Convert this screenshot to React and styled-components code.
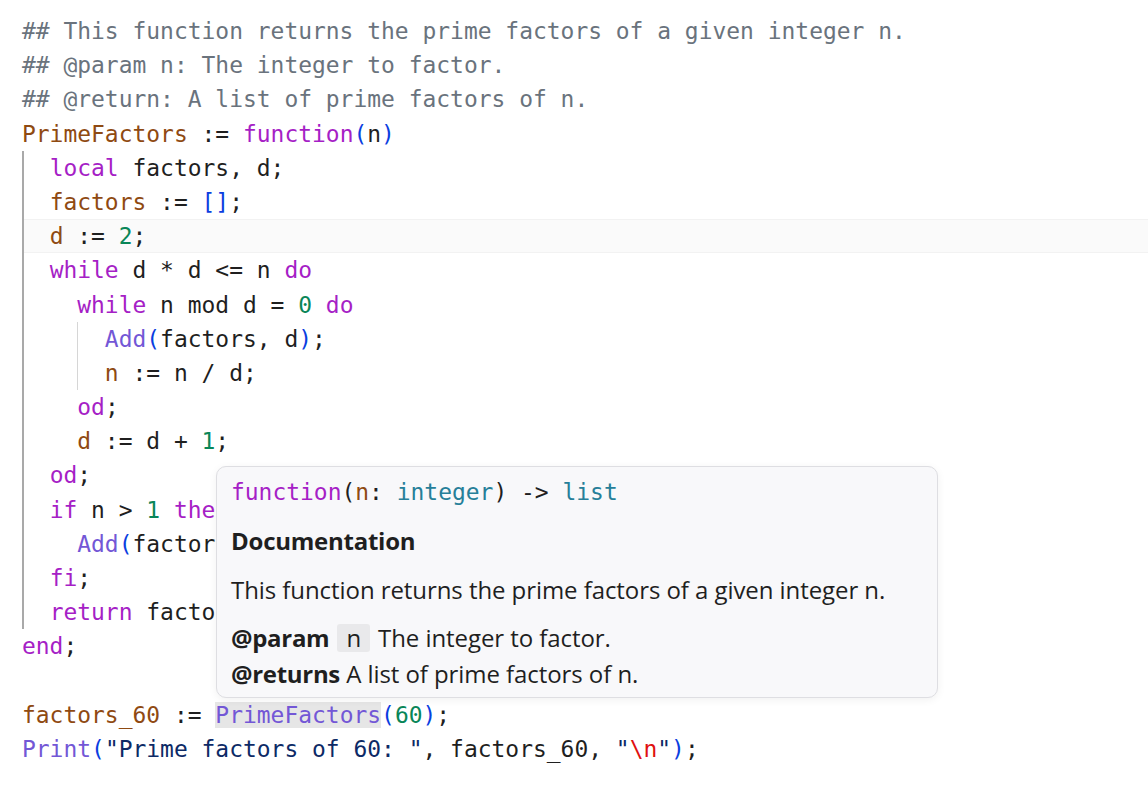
import React from "react";
import styled, { createGlobalStyle } from "styled-components";

const Global = createGlobalStyle`
  html, body { margin: 0; padding: 0; background: #ffffff; }
  body { width: 1148px; height: 799px; overflow: hidden; }
`;

const COLORS = {
  cm: "#6a737d",
  vr: "#8f4a12",
  kw: "#a61fc6",
  br: "#0a3ee0",
  nm: "#098658",
  fn: "#7357d6",
  tx: "#1f1f1f",
  st: "#0d2a66",
  es: "#e01010",
  ty: "#267f99",
};

const Page = styled.div`
  position: relative;
  width: 1148px;
  height: 799px;
  background: #ffffff;
`;

const Code = styled.div`
  padding: 14px 0 0 22px;
  font-family: "DejaVu Sans Mono", "Liberation Mono", monospace;
  font-size: 22.95px;
  color: ${COLORS.tx};
`;

const Line = styled.div`
  height: 34.2px;
  white-space: pre;
  box-sizing: border-box;
  background: ${(p) => (p.$active ? "#fafafa" : "transparent")};
  border-top: 1px solid ${(p) => (p.$active ? "#f2f2f2" : "transparent")};
  border-bottom: 1px solid ${(p) => (p.$active ? "#f2f2f2" : "transparent")};
  line-height: 32.2px;
`;

const Block = styled.div`
  position: relative;
  &::before {
    content: "";
    position: absolute;
    top: 0;
    bottom: 0;
    left: ${(p) => p.$guide}px;
    width: ${(p) => (p.$strong ? 2 : 1)}px;
    background: ${(p) => (p.$strong ? "#a9a9a9" : "#d6d6d6")};
    z-index: 1;
  }
`;

const T = styled.span`
  color: ${(p) => COLORS[p.$c] || COLORS.tx};
  background: ${(p) => (p.$hl ? "#e6e6e6" : "transparent")};
`;

const Hover = styled.div`
  position: absolute;
  left: 216px;
  top: 466px;
  width: 722px;
  height: 232px;
  box-sizing: border-box;
  background: #f8f8fa;
  border: 1px solid #dedee2;
  border-radius: 10px;
  box-shadow: 0 2px 8px rgba(0, 0, 0, 0.06);
  padding: 8px 14px 0 14px;
  z-index: 5;
  color: #1f1f1f;
`;

const Signature = styled.div`
  font-family: "DejaVu Sans Mono", "Liberation Mono", monospace;
  font-size: 22.95px;
  line-height: 34px;
  white-space: pre;
`;

const Heading = styled.div`
  margin-top: 16px;
  font-family: "Open Sans", "Noto Sans", sans-serif;
  font-weight: 700;
  font-size: 24px;
  line-height: 32px;
  letter-spacing: -0.25px;
`;

const Para = styled.div`
  margin-top: ${(p) => p.$gap}px;
  font-family: "Open Sans", "Noto Sans", sans-serif;
  font-size: 24px;
  line-height: 32px;
  letter-spacing: -0.07px;
  display: flex;
  align-items: center;
  white-space: pre;
`;

const Tag = styled.b`
  font-weight: 700;
  letter-spacing: -0.3px;
`;

const Chip = styled.span`
  display: inline-flex;
  align-items: center;
  height: 28px;
  padding: 0 9px;
  margin: 0 8px 0 8px;
  background: #e9e9eb;
  border-radius: 3px;
`;

export default function App() {
  return (
    <Page>
      <Global />
      <Code>
        <Line><T $c="cm">## This function returns the prime factors of a given integer n.</T></Line>
        <Line><T $c="cm">## @param n: The integer to factor.</T></Line>
        <Line><T $c="cm">## @return: A list of prime factors of n.</T></Line>
        <Line>
          <T $c="vr">PrimeFactors</T> := <T $c="kw">function</T><T $c="br">(</T>n<T $c="br">)</T>
        </Line>
        <Block $guide={0} $strong>
          <Line>  <T $c="kw">local</T> factors, d;</Line>
          <Line>  <T $c="vr">factors</T> := <T $c="br">[]</T>;</Line>
          <Line $active>  <T $c="vr">d</T> := <T $c="nm">2</T>;</Line>
          <Line>  <T $c="kw">while</T> d * d {"<="} n <T $c="kw">do</T></Line>
          <Line>    <T $c="kw">while</T> n mod d = <T $c="nm">0</T> <T $c="kw">do</T></Line>
          <Block $guide={55}>
            <Line>      <T $c="fn">Add</T><T $c="br">(</T>factors, d<T $c="br">)</T>;</Line>
            <Line>      <T $c="vr">n</T> := n / d;</Line>
          </Block>
          <Line>    <T $c="kw">od</T>;</Line>
          <Line>    <T $c="vr">d</T> := d + <T $c="nm">1</T>;</Line>
          <Line>  <T $c="kw">od</T>;</Line>
          <Line>  <T $c="kw">if</T> n {">"} <T $c="nm">1</T> <T $c="kw">then</T></Line>
          <Line>    <T $c="fn">Add</T><T $c="br">(</T>factors, n<T $c="br">)</T>;</Line>
          <Line>  <T $c="kw">fi</T>;</Line>
          <Line>  <T $c="kw">return</T> factors;</Line>
        </Block>
        <Line><T $c="kw">end</T>;</Line>
        <Line> </Line>
        <Line>
          <T $c="vr">factors_60</T> := <T $c="fn" $hl>PrimeFactors</T><T $c="br">(</T><T $c="nm">60</T><T $c="br">)</T>;
        </Line>
        <Line>
          <T $c="fn">Print</T><T $c="br">(</T><T $c="st">"Prime factors of 60: "</T>, factors_60, <T $c="st">"</T><T $c="es">\n</T><T $c="st">"</T><T $c="br">)</T>;
        </Line>
      </Code>

      <Hover>
        <Signature>
          <T $c="kw">function</T>(<T $c="vr">n</T>: <T $c="ty">integer</T>) -&gt; <T $c="ty">list</T>
        </Signature>
        <Heading>Documentation</Heading>
        <Para $gap={17}>This function returns the prime factors of a given integer n.</Para>
        <Para $gap={16}>
          <Tag>@param</Tag>
          <Chip>n</Chip>
          The integer to factor.
        </Para>
        <Para $gap={4}>
          <Tag>@returns</Tag> A list of prime factors of n.
        </Para>
      </Hover>
    </Page>
  );
}
